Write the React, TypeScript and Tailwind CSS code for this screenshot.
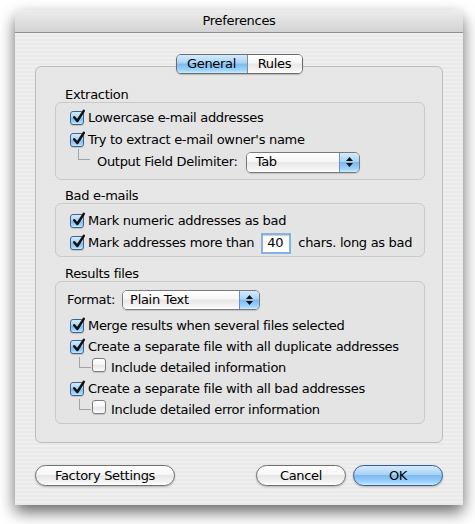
import React from 'react';

const aquaBlue =
  'bg-[linear-gradient(to_bottom,#d4ebfc_0%,#a9d3f6_45%,#7cb9ef_50%,#9ed4fb_85%,#c8efff_100%)]';
const aquaWhite =
  'bg-[linear-gradient(to_bottom,#ffffff_0%,#f6f6f6_45%,#e7e7e7_50%,#f4f4f4_85%,#ffffff_100%)]';

const CheckMark: React.FC = () => (
  <svg
    width="16"
    height="16"
    viewBox="0 0 16 16"
    className="absolute left-[0px] top-[-3px] overflow-visible"
  >
    <path
      d="M3.2 8.2 L6.3 12 L12.8 1.8"
      fill="none"
      stroke="#111"
      strokeWidth="2.5"
      strokeLinecap="round"
      strokeLinejoin="round"
    />
  </svg>
);

const Checkbox: React.FC<{ checked?: boolean }> = ({ checked }) => (
  <span
    className={`relative inline-block w-[14px] h-[14px] shrink-0 rounded-[3px] border shadow-[0_1px_1px_rgba(0,0,0,0.15)] ${
      checked ? `${aquaBlue} border-[#41618f]` : `${aquaWhite} border-[#7d7d7d]`
    }`}
  >
    {checked && <CheckMark />}
  </span>
);

// little "└─" connector for dependent options
const Elbow: React.FC<{ offset?: string }> = ({ offset = '' }) => (
  <span
    className={`self-start h-[11px] w-[12px] shrink-0 border-l border-b border-[#a3a3a3] ${offset}`}
  />
);

const CheckRow: React.FC<{ checked?: boolean; label: string; h?: string }> = ({
  checked,
  label,
  h = 'h-[22px]',
}) => (
  <div className={`flex items-center gap-[4px] ${h}`}>
    <Checkbox checked={checked} />
    <span>{label}</span>
  </div>
);

const PopUp: React.FC<{ value: string; width: string; height: string; inset: string }> = ({
  value,
  width,
  height,
  inset,
}) => (
  <div
    className={`flex ${width} ${height} rounded-[5px] border border-[#7a7a7a] overflow-hidden shadow-[0_1px_1px_rgba(0,0,0,0.15)]`}
  >
    <div className={`flex-1 flex items-center ${inset} ${aquaWhite}`}>{value}</div>
    <div className={`w-[20px] flex flex-col items-center justify-center gap-[2px] border-l border-[#6f8fbf] ${aquaBlue}`}>
      <svg width="7" height="4" viewBox="0 0 7 4">
        <path d="M0 4 L3.5 0 L7 4 Z" fill="#111" />
      </svg>
      <svg width="7" height="4" viewBox="0 0 7 4">
        <path d="M0 0 L3.5 4 L7 0 Z" fill="#111" />
      </svg>
    </div>
  </div>
);

const AquaButton: React.FC<{ label: string; width: string; primary?: boolean }> = ({
  label,
  width,
  primary,
}) => (
  <div
    className={`flex items-center justify-center ${width} h-[21px] rounded-full border shadow-[0_1px_2px_rgba(0,0,0,0.25)] ${
      primary ? `${aquaBlue} border-[#3d5b8c]` : `${aquaWhite} border-[#6f6f6f]`
    }`}
  >
    {label}
  </div>
);

const GroupBox: React.FC<{ title: string; top: string; box: string; children: React.ReactNode }> = ({
  title,
  top,
  box,
  children,
}) => (
  <div className={top}>
    <div className="h-[15px] leading-[16px] pl-[10px]">{title}</div>
    <div className={`rounded-[6px] border border-[#c9c9c9] bg-[#e3e3e3]/80 pl-[14px] ${box}`}>
      {children}
    </div>
  </div>
);

export default function App() {
  return (
    <div className="w-[475px] h-[524px] bg-white pl-[15px] pt-[10px] font-['DejaVu_Sans',sans-serif] text-[13px] tracking-[-0.3px] text-black">
      <div className="w-[448px] h-[495px] flex flex-col rounded-t-[6px] overflow-hidden shadow-[0_7px_16px_rgba(0,0,0,0.6)]">
        {/* title bar */}
        <div className="h-[23px] shrink-0 flex items-center justify-center border-b border-[#8f8f8f] bg-[linear-gradient(to_bottom,#ededed,#d3d3d3)]">
          Preferences
        </div>

        {/* pinstriped body */}
        <div className="flex-1 flex flex-col px-[20px] pt-[21px] pb-[19px] bg-[repeating-linear-gradient(to_bottom,#efefef_0px,#efefef_2px,#e9e9e9_2px,#e9e9e9_4px)]">
          <div className="relative z-10 flex justify-center">
            <div className="flex h-[20px] rounded-[5px] border border-[#6c6c6c] overflow-hidden shadow-[0_1px_1px_rgba(0,0,0,0.2)]">
              <div className={`w-[70px] flex items-center justify-center ${aquaBlue}`}>General</div>
              <div className={`w-[55px] flex items-center justify-center border-l border-[#8a8a8a] ${aquaWhite}`}>
                Rules
              </div>
            </div>
          </div>

          <div className="-mt-[8px] h-[377px] rounded-[6px] border border-[#bdbdbd] bg-[#e4e4e4]/70 pl-[19px] pr-[17px] pt-[20px]">
            <GroupBox title="Extraction" top="" box="h-[78px] pt-[4px]">
              <CheckRow checked label="Lowercase e-mail addresses" />
              <CheckRow checked label="Try to extract e-mail owner's name" />
              <div className="flex items-center h-[22px]">
                <Elbow offset="ml-[8px] -mt-[2px]" />
                <span className="ml-[7px]">Output Field Delimiter:</span>
                <div className="ml-[8px]">
                  <PopUp value="Tab" width="w-[114px]" height="h-[21px]" inset="pl-[9px]" />
                </div>
              </div>
            </GroupBox>

            <GroupBox title="Bad e-mails" top="mt-[8px]" box="h-[54px] pt-[6px]">
              <CheckRow checked label="Mark numeric addresses as bad" />
              <div className="flex items-center h-[22px]">
                <Checkbox checked />
                <span className="ml-[4px]">Mark addresses more than</span>
                <div className="ml-[7px] w-[30px] h-[21px] flex items-center pl-[4px] bg-white border-2 border-[#86b1e3] shadow-[inset_0_1px_1px_rgba(0,0,0,0.2)]">
                  40
                </div>
                <span className="ml-[7px]">chars. long as bad</span>
              </div>
            </GroupBox>

            <GroupBox title="Results files" top="mt-[9px]" box="h-[143px] pt-[7px] !pl-[11px]">
              <div className="flex items-center h-[22px]">
                <span>Format:</span>
                <div className="ml-[7px]">
                  <PopUp value="Plain Text" width="w-[138px]" height="h-[20px]" inset="pl-[7px]" />
                </div>
              </div>
              <div className="mt-[4px] pl-[3px]">
                <CheckRow checked label="Merge results when several files selected" h="h-[21px]" />
                <CheckRow checked label="Create a separate file with all duplicate addresses" h="h-[21px]" />
                <div className="flex items-center h-[21px]">
                  <Elbow offset="ml-[9px]" />
                  <span className="ml-[1px]">
                    <Checkbox />
                  </span>
                  <span className="ml-[5px]">Include detailed information</span>
                </div>
                <CheckRow checked label="Create a separate file with all bad addresses" h="h-[21px]" />
                <div className="flex items-center h-[21px]">
                  <Elbow offset="ml-[9px]" />
                  <span className="ml-[1px]">
                    <Checkbox />
                  </span>
                  <span className="ml-[5px]">Include detailed error information</span>
                </div>
              </div>
            </GroupBox>
          </div>

          <div className="mt-[22px] flex items-center">
            <AquaButton label="Factory Settings" width="w-[140px]" />
            <div className="flex-1" />
            <AquaButton label="Cancel" width="w-[90px]" />
            <div className="w-[7px]" />
            <AquaButton label="OK" width="w-[90px]" primary />
          </div>
        </div>
      </div>
    </div>
  );
}
